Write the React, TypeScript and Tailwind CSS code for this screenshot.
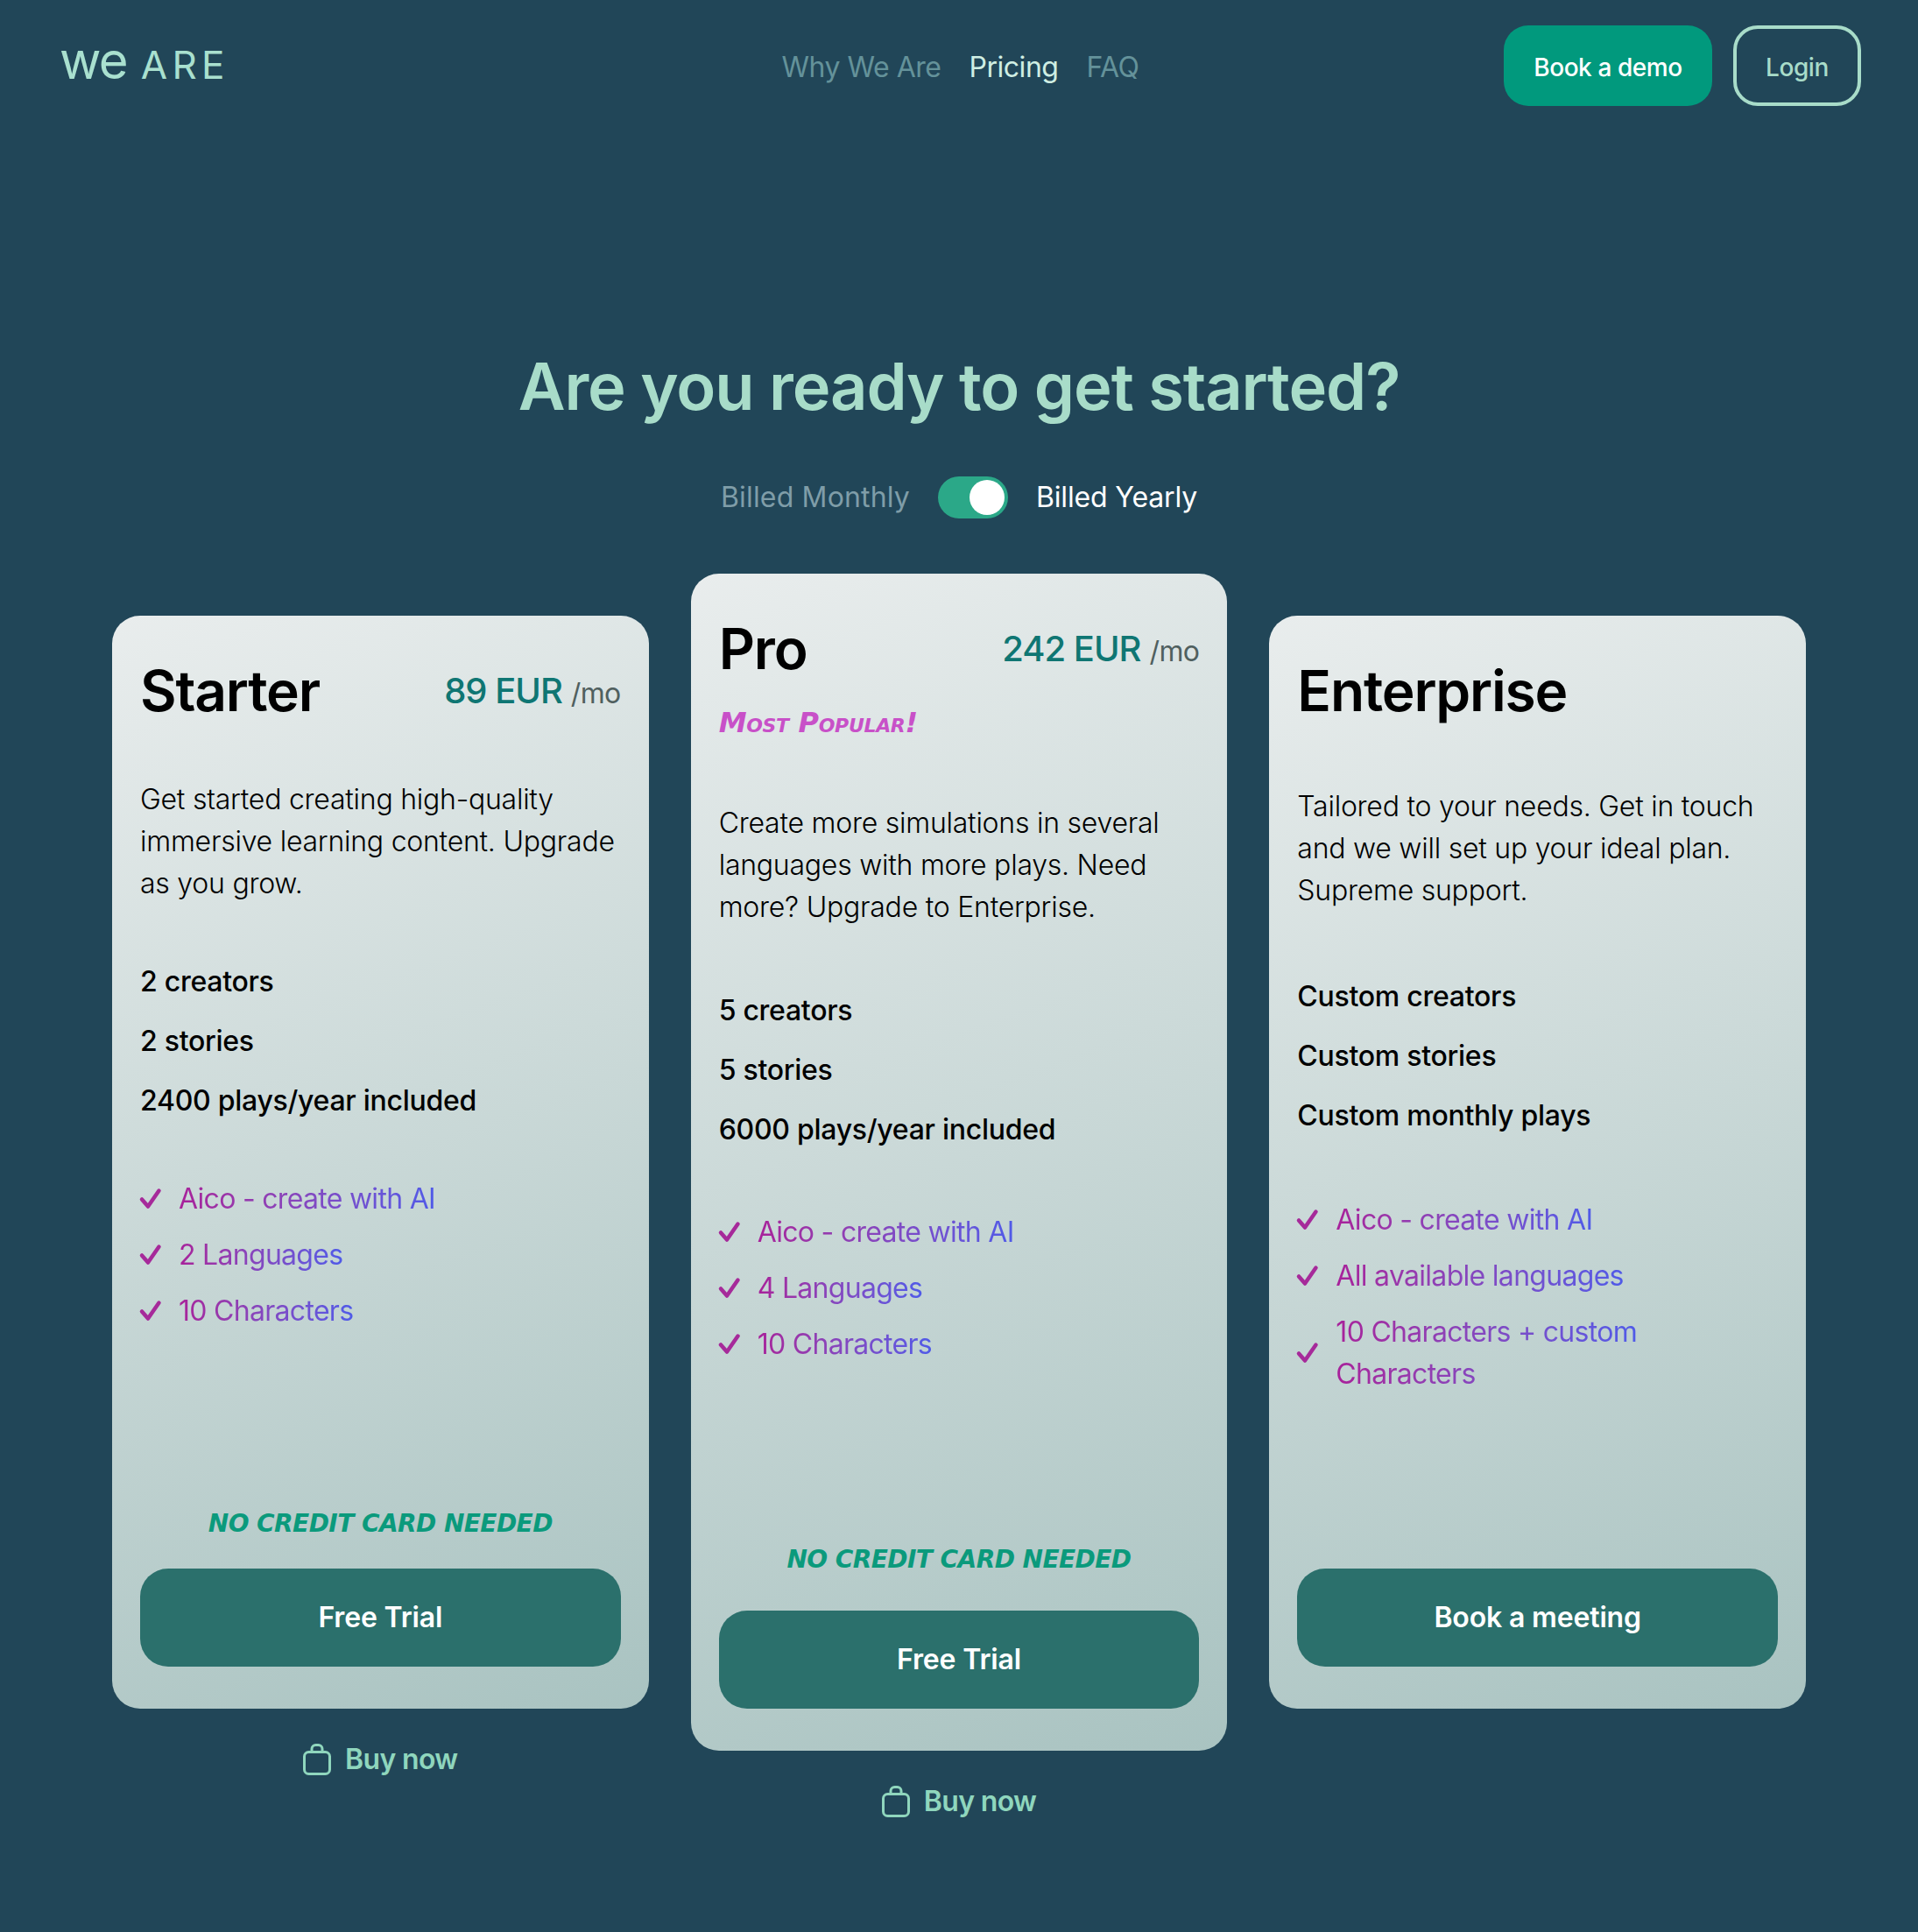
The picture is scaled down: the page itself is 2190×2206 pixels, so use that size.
interface Plan {
  name: string;
  price?: string;
  popular?: boolean;
  description: string[];
  limits: string[];
  perks: string[][];
  cta: string;
  noCard: boolean;
  buy: boolean;
  column: string;
  card: string;
  descClass: string;
  limitsClass: string;
  perksClass: string;
  noCardClass: string;
}

const plans: Plan[] = [
  {
    name: 'Starter',
    price: '89 EUR',
    description: ['Get started creating high-quality', 'immersive learning content. Upgrade', 'as you grow.'],
    limits: ['2 creators', '2 stories', '2400 plays/year included'],
    perks: [['Aico - create with AI'], ['2 Languages'], ['10 Characters']],
    cta: 'Free Trial',
    noCard: true,
    buy: true,
    column: 'mt-[48px]',
    card: 'h-[1248px]',
    descClass: 'mt-[62px]',
    limitsClass: 'mt-[64px]',
    perksClass: 'mt-[64px]',
    noCardClass: 'mb-[31px]',
  },
  {
    name: 'Pro',
    price: '242 EUR',
    popular: true,
    description: ['Create more simulations in several', 'languages with more plays. Need', 'more? Upgrade to Enterprise.'],
    limits: ['5 creators', '5 stories', '6000 plays/year included'],
    perks: [['Aico - create with AI'], ['4 Languages'], ['10 Characters']],
    cta: 'Free Trial',
    noCard: true,
    buy: true,
    column: '',
    card: 'h-[1344px]',
    descClass: 'mt-[71px]',
    limitsClass: 'mt-[70px]',
    perksClass: 'mt-[69px]',
    noCardClass: 'mb-[38px]',
  },
  {
    name: 'Enterprise',
    description: ['Tailored to your needs. Get in touch', 'and we will set up your ideal plan.', 'Supreme support.'],
    limits: ['Custom creators', 'Custom stories', 'Custom monthly plays'],
    perks: [['Aico - create with AI'], ['All available languages'], ['10 Characters + custom', 'Characters']],
    cta: 'Book a meeting',
    noCard: false,
    buy: false,
    column: 'mt-[48px]',
    card: 'h-[1248px]',
    descClass: 'mt-[70px]',
    limitsClass: 'mt-[73px]',
    perksClass: 'mt-[71px]',
    noCardClass: '',
  },
];

function BagIcon() {
  return (
    <svg width="32" height="36" viewBox="0 0 32 36" fill="none" stroke="#8fd6bd" strokeWidth="3">
      <rect x="1.5" y="9.5" width="29" height="25" rx="5" />
      <path d="M10 9.5V6a4.5 4.5 0 0 1 4.5-4.5h3A4.5 4.5 0 0 1 22 6v3.5" />
    </svg>
  );
}

function TickIcon() {
  return (
    <svg
      width="24"
      height="24"
      viewBox="0 0 24 24"
      fill="none"
      stroke="#a62a9a"
      strokeWidth="4.5"
      strokeLinecap="round"
      strokeLinejoin="round"
      className="shrink-0 overflow-visible"
    >
      <path d="M2 12.5L9 20.5L21.5 2.5" />
    </svg>
  );
}

function PlanCard({ plan }: { plan: Plan }) {
  return (
    <div className={plan.column}>
      <div className={`${plan.card} flex flex-col rounded-[32px] bg-linear-160 from-[#e9eded] to-[#a9c3c1] px-[32px] pt-[48px] pb-[48px]`}>
        <div className="flex items-center justify-between">
          <h2 className="text-[64px] leading-[76px] font-semibold tracking-[-0.018em] text-black">{plan.name}</h2>
          {plan.price && (
            <div className="flex items-baseline gap-[10px]">
              <span className="text-[40px] font-medium tracking-[-0.025em] text-[#0f7673]">{plan.price}</span>
              <span className="text-[32px] tracking-[-0.02em] text-[#50605f]">/mo</span>
            </div>
          )}
        </div>
        {plan.popular && (
          <p className="mt-[26px] font-['DejaVu_Sans'] text-[32px] leading-[40px] font-bold tracking-[-0.01em] text-[#c850c8] italic [font-variant-caps:small-caps]">
            Most Popular!
          </p>
        )}
        <div className={`${plan.descClass} text-[32px] leading-[48px] font-light tracking-[-0.0075em] text-black`}>
          {plan.description.map((line) => (
            <p key={line} className="whitespace-nowrap">{line}</p>
          ))}
        </div>
        <ul className={`${plan.limitsClass} flex flex-col gap-[20px] text-[32px] leading-[48px] font-medium tracking-[-0.0085em] text-black`}>
          {plan.limits.map((item) => (
            <li key={item}>{item}</li>
          ))}
        </ul>
        <ul className={`${plan.perksClass} flex flex-col gap-[16px]`}>
          {plan.perks.map((perk) => (
            <li key={perk[0]} className="flex items-center gap-[20px]">
              <TickIcon />
              <span className="bg-linear-to-r from-[#a8209a] to-[#4f5ae8] bg-clip-text text-[32px] leading-[48px] font-normal tracking-[-0.022em] text-transparent">
                {perk.map((line) => (
                  <span key={line} className="block whitespace-nowrap">{line}</span>
                ))}
              </span>
            </li>
          ))}
        </ul>
        <div className="mt-auto">
          {plan.noCard && (
            <p className={`${plan.noCardClass} text-center font-['DejaVu_Sans'] text-[28px] leading-[40px] font-bold tracking-[-0.02em] text-[#0b9a7c] uppercase italic`}>
              No credit card needed
            </p>
          )}
          <button className="flex h-[112px] w-full items-center justify-center rounded-[32px] bg-[#2b706c] text-[32px] font-semibold tracking-[-0.005em] text-white">
            {plan.cta}
          </button>
        </div>
      </div>
      {plan.buy && (
        <div className="mt-[38px] flex items-center justify-center gap-[16px] text-[32px] leading-[40px] font-semibold tracking-[-0.02em] text-[#8fd6bd]">
          <BagIcon />
          Buy now
        </div>
      )}
    </div>
  );
}

export default function App() {
  return (
    <div className="min-h-[2206px] bg-[#214658] font-['Inter',sans-serif]">
      <header className="flex items-center justify-between pt-[29px] pr-[65px] pl-[68px]">
        <div className="flex h-[92px] w-[500px] items-baseline gap-[16px] pt-[10px] font-normal text-[#a9e0cf]">
          <span className="text-[58px] leading-[60px] tracking-[-0.03em]">we</span>
          <span className="text-[44px] leading-[60px] tracking-[0.12em]">ARE</span>
        </div>
        <nav className="flex gap-[32px] pt-[4px] text-[32px] font-normal tracking-[-0.015em]">
          <a className="text-[#64929a]">Why We Are</a>
          <a className="text-[#cfeee3]">Pricing</a>
          <a className="text-[#64929a]">FAQ</a>
        </nav>
        <div className="flex w-[500px] justify-end gap-[24px] text-[28px] font-medium tracking-[-0.015em]">
          <button className="h-[92px] w-[238px] rounded-[28px] bg-[#01997d] pt-[3px] text-white">Book a demo</button>
          <button className="h-[92px] w-[146px] rounded-[28px] border-[4px] border-[#a8dcc9] pt-[3px] text-[#a8dcc9]">Login</button>
        </div>
      </header>

      <h1 className="mt-[274px] text-center text-[74px] leading-[92px] font-semibold tracking-[-0.015em] text-[#a8dcc9]">
        Are you ready to get started?
      </h1>

      <div className="mt-[57px] flex items-center justify-center gap-[32px] text-[32px] leading-[48px] font-normal">
        <span className="tracking-[0.005em] text-[#7f9da8]">Billed Monthly</span>
        <div className="flex h-[48px] w-[80px] items-center justify-end rounded-full bg-[#2ba888] pr-[4px]">
          <div className="h-[40px] w-[40px] rounded-full bg-white" />
        </div>
        <span className="tracking-[-0.005em] text-white">Billed Yearly</span>
      </div>

      <main className="mx-auto mt-[63px] grid w-[1934px] grid-cols-3 items-start gap-[48px]">
        {plans.map((plan) => (
          <PlanCard key={plan.name} plan={plan} />
        ))}
      </main>
    </div>
  );
}
